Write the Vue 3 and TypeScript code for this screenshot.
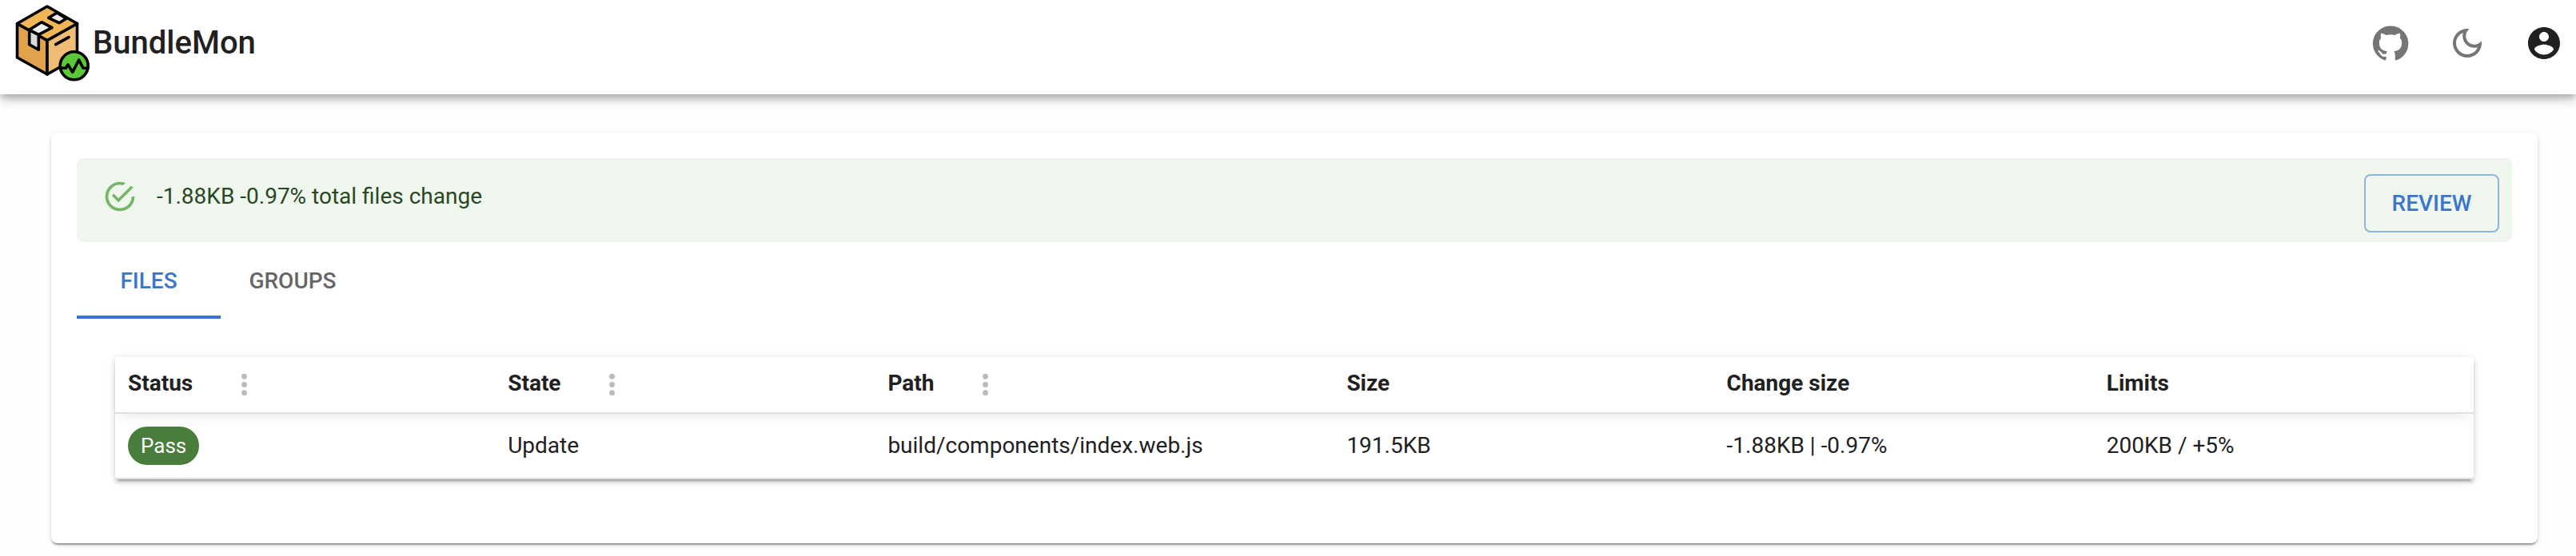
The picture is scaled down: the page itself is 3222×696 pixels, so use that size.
<script setup lang="ts">
import { ref } from 'vue'

interface Column {
  key: 'status' | 'state' | 'path' | 'size' | 'change' | 'limits'
  label: string
  menu: boolean
}

const columns: Column[] = [
  { key: 'status', label: 'Status', menu: true },
  { key: 'state', label: 'State', menu: true },
  { key: 'path', label: 'Path', menu: true },
  { key: 'size', label: 'Size', menu: false },
  { key: 'change', label: 'Change size', menu: false },
  { key: 'limits', label: 'Limits', menu: false },
]

const rows = [
  {
    status: 'Pass',
    state: 'Update',
    path: 'build/components/index.web.js',
    size: '191.5KB',
    change: '-1.88KB | -0.97%',
    limits: '200KB / +5%',
  },
]

const tabs = ['FILES', 'GROUPS']
const activeTab = ref('FILES')
</script>

<template>
  <div class="page">
    <header class="app-bar">
      <a class="brand" href="#">
        <svg class="logo" viewBox="0 0 96 100" aria-hidden="true">
          <g stroke="#000" stroke-width="3.600" stroke-linejoin="round" stroke-linecap="round">
            <path d="M3.500 25.500 41 46.500V89L3.500 68Z" fill="#e2a24b" />
            <path d="M41 46.500 78.500 25.500V68L41 89Z" fill="#efbc76" />
            <path d="M3.500 25.500 41 4 78.500 25.500 41 46.500Z" fill="#f1b757" />
            <path d="M42.700 18.300 53.300 12 65 19.300 56 24.700Z" fill="#eee" />
            <path d="M18.700 33.300 30.300 39.300V58.300L18.700 51.700Z" fill="#d9d9d9" />
            <path d="M18.700 33.300 34 23.700 47 30.700 30.300 39.300Z" fill="#eee" />
            <path d="M51.700 51.700 68 42.700" fill="none" />
            <circle cx="74.700" cy="78.300" r="17.500" fill="#5bc83a" />
            <path d="M57.500 81.300H64.300L67 77 72.700 86.300 80.700 71 86 81.300H92" fill="none" />
          </g>
        </svg>
        <span class="brand-name">BundleMon</span>
      </a>
      <nav class="actions">
        <a class="icon-button" href="#" aria-label="GitHub">
          <svg viewBox="0 0 24 24"><path d="M12 1.27a11 11 0 00-3.48 21.46c.55.09.73-.28.73-.55v-1.84c-3.03.64-3.67-1.46-3.67-1.46-.55-1.29-1.28-1.65-1.28-1.65-.92-.65.1-.65.1-.65 1.1 0 1.73 1.1 1.73 1.1.92 1.65 2.57 1.2 3.21.92a2 2 0 01.64-1.47c-2.47-.27-5.04-1.19-5.04-5.5 0-1.1.46-2.1 1.2-2.84a3.76 3.76 0 010-2.93s.91-.28 3.11 1.1c1.8-.49 3.7-.49 5.5 0 2.1-1.38 3.02-1.1 3.02-1.1a3.76 3.76 0 01.1 2.93c.83.74 1.2 1.74 1.2 2.94 0 4.21-2.57 5.13-5.04 5.4.45.37.82.92.82 2.02v3.03c0 .27.1.64.73.55A11 11 0 0012 1.27" /></svg>
        </a>
        <button class="icon-button" type="button" aria-label="Dark mode">
          <svg viewBox="0 0 24 24"><path d="M9.37 5.51c-.18.64-.27 1.31-.27 1.99 0 4.08 3.32 7.4 7.4 7.4.68 0 1.35-.09 1.99-.27C17.45 17.19 14.93 19 12 19c-3.86 0-7-3.14-7-7 0-2.93 1.81-5.45 4.37-6.49zM12 3c-4.97 0-9 4.03-9 9s4.03 9 9 9 9-4.03 9-9c0-.46-.04-.92-.1-1.36-.98 1.37-2.58 2.26-4.4 2.26-2.98 0-5.4-2.42-5.4-5.4 0-1.81.89-3.42 2.26-4.4-.44-.06-.9-.1-1.36-.1z" /></svg>
        </button>
        <button class="icon-button account" type="button" aria-label="Account">
          <svg viewBox="0 0 24 24"><path d="M12 2C6.48 2 2 6.48 2 12s4.48 10 10 10 10-4.48 10-10S17.52 2 12 2zm0 3c1.66 0 3 1.34 3 3s-1.34 3-3 3-3-1.34-3-3 1.34-3 3-3zm0 14.2c-2.5 0-4.71-1.28-6-3.22.03-1.99 4-3.08 6-3.08 1.99 0 5.97 1.09 6 3.08-1.29 1.94-3.5 3.22-6 3.22z" /></svg>
        </button>
      </nav>
    </header>

    <main class="card">
      <div class="alert" role="status">
        <svg class="alert-icon" viewBox="0 0 24 24" aria-hidden="true"><path d="M20,12A8,8 0 0,1 12,20A8,8 0 0,1 4,12A8,8 0 0,1 12,4C12.76,4 13.5,4.11 14.2,4.31L15.77,2.74C14.61,2.26 13.34,2 12,2A10,10 0 0,0 2,12A10,10 0 0,0 12,22A10,10 0 0,0 22,12M7.91,10.08L6.5,11.5L11,16L21,6L19.59,4.58L11,13.17L7.91,10.08Z" /></svg>
        <span class="alert-text">-1.88KB -0.97% total files change</span>
        <button class="review" type="button">REVIEW</button>
      </div>

      <div class="tabs" role="tablist">
        <button
          v-for="tab in tabs"
          :key="tab"
          type="button"
          role="tab"
          class="tab"
          :class="{ active: tab === activeTab }"
          :aria-selected="tab === activeTab"
          @click="activeTab = tab"
        >{{ tab }}</button>
      </div>

      <div class="panel" role="tabpanel">
        <table class="table">
          <colgroup>
            <col v-for="c in columns" :key="c.key" :class="'col-' + c.key" />
          </colgroup>
          <thead>
            <tr>
              <th v-for="c in columns" :key="c.key" scope="col">
                <div class="head-cell">
                  <span class="head-label">{{ c.label }}</span>
                  <button v-if="c.menu" class="column-menu" type="button" :aria-label="c.label + ' column actions'">
                    <svg viewBox="0 0 24 24"><circle cx="12" cy="6" r="2" /><circle cx="12" cy="12" r="2" /><circle cx="12" cy="18" r="2" /></svg>
                  </button>
                </div>
              </th>
            </tr>
          </thead>
          <tbody>
            <tr v-for="row in rows" :key="row.path">
              <td v-for="c in columns" :key="c.key">
                <span v-if="c.key === 'status'" class="chip">{{ row.status }}</span>
                <template v-else>{{ row[c.key] }}</template>
              </td>
            </tr>
          </tbody>
        </table>
      </div>
    </main>
  </div>
</template>

<style>
body {
  margin: 0;
  background: #fefefe;
}
</style>

<style scoped>
.page {
  font-family: Roboto, "Liberation Sans", sans-serif;
  font-size: 28px;
  line-height: 40px;
  color: #212121;
}
button {
  font: inherit;
  color: inherit;
  background: none;
  border: 0;
  margin: 0;
  padding: 0;
  cursor: pointer;
}
svg {
  display: block;
  fill: currentColor;
}
.app-bar {
  display: flex;
  justify-content: space-between;
  box-sizing: border-box;
  height: 118px;
  padding: 4px 16px 0 18px;
  background: #fff;
  box-shadow: 0 4px 8px -2px rgba(0, 0, 0, 0.2), 0 8px 10px rgba(0, 0, 0, 0.14), 0 2px 20px rgba(0, 0, 0, 0.12);
}
.brand {
  display: flex;
  align-items: center;
  gap: 2px;
  height: 100px;
  color: inherit;
  text-decoration: none;
}
.logo {
  width: 96px;
  height: 100px;
}
.brand-name {
  font-size: 40px;
  font-weight: 500;
  line-height: 64px;
}
.actions {
  display: flex;
  align-items: center;
  gap: 48px;
  height: 100px;
}
.icon-button {
  width: 48px;
  height: 48px;
  color: #757575;
}
.icon-button svg {
  width: 48px;
  height: 48px;
}
.account {
  color: #212121;
}
.card {
  margin: 48px 48px 16px 64px;
  padding: 32px;
  border-radius: 8px;
  background: #fff;
  box-shadow: 0 4px 2px -2px rgba(0, 0, 0, 0.24), 0 2px 2px rgba(0, 0, 0, 0.16), 0 2px 6px rgba(0, 0, 0, 0.12);
}
.alert {
  display: flex;
  align-items: flex-start;
  padding: 12px 16px 12px 32px;
  border-radius: 8px;
  background: #eff6ed;
  color: #2a4724;
}
.alert-icon {
  width: 44px;
  height: 44px;
  margin: 14px 24px 0 0;
  color: #75b566;
}
.alert-text {
  flex: 1;
  padding-top: 16px;
}
.review {
  min-width: 169px;
  margin-top: 8px;
  padding: 10px 30px;
  border: 2px solid #8fb3de;
  border-radius: 8px;
  font-weight: 500;
  line-height: 49px;
  color: #3a75ce;
}
.tabs {
  display: flex;
}
.tab {
  box-sizing: border-box;
  min-width: 180px;
  height: 96px;
  padding: 6px 32px 0;
  border-bottom: 4px solid transparent;
  font-weight: 500;
  color: #666;
}
.tab.active {
  border-bottom-color: #3a75ce;
  color: #3a75ce;
}
.panel {
  padding: 48px;
}
.table {
  width: 100%;
  table-layout: fixed;
  border-collapse: separate;
  border-spacing: 0;
  background: #fff;
  box-shadow: 0 6px 2px -4px rgba(0, 0, 0, 0.2), 0 4px 4px rgba(0, 0, 0, 0.14), 0 2px 10px rgba(0, 0, 0, 0.12);
}
.col-path {
  width: 574px;
}
th,
td {
  padding: 0 16px;
  text-align: left;
  border-bottom: 2px solid #e0e0e0;
}
th {
  height: 69px;
  font-weight: 700;
}
td {
  height: 80px;
}
thead {
  box-shadow: 0 8px 16px -8px rgba(0, 0, 0, 0.12);
}
.head-cell {
  display: flex;
  align-items: center;
  gap: 32px;
  height: 68px;
}
.head-label {
  padding-bottom: 4px;
}
.column-menu {
  width: 64px;
  height: 64px;
  color: #bbb;
}
.column-menu svg {
  width: 41px;
  height: 41px;
  margin: 0 auto;
}
.chip {
  display: inline-block;
  padding: 0 16px;
  border-radius: 24px;
  background: #487d3c;
  font-size: 26px;
  line-height: 48px;
  color: #fff;
  vertical-align: middle;
}
</style>
